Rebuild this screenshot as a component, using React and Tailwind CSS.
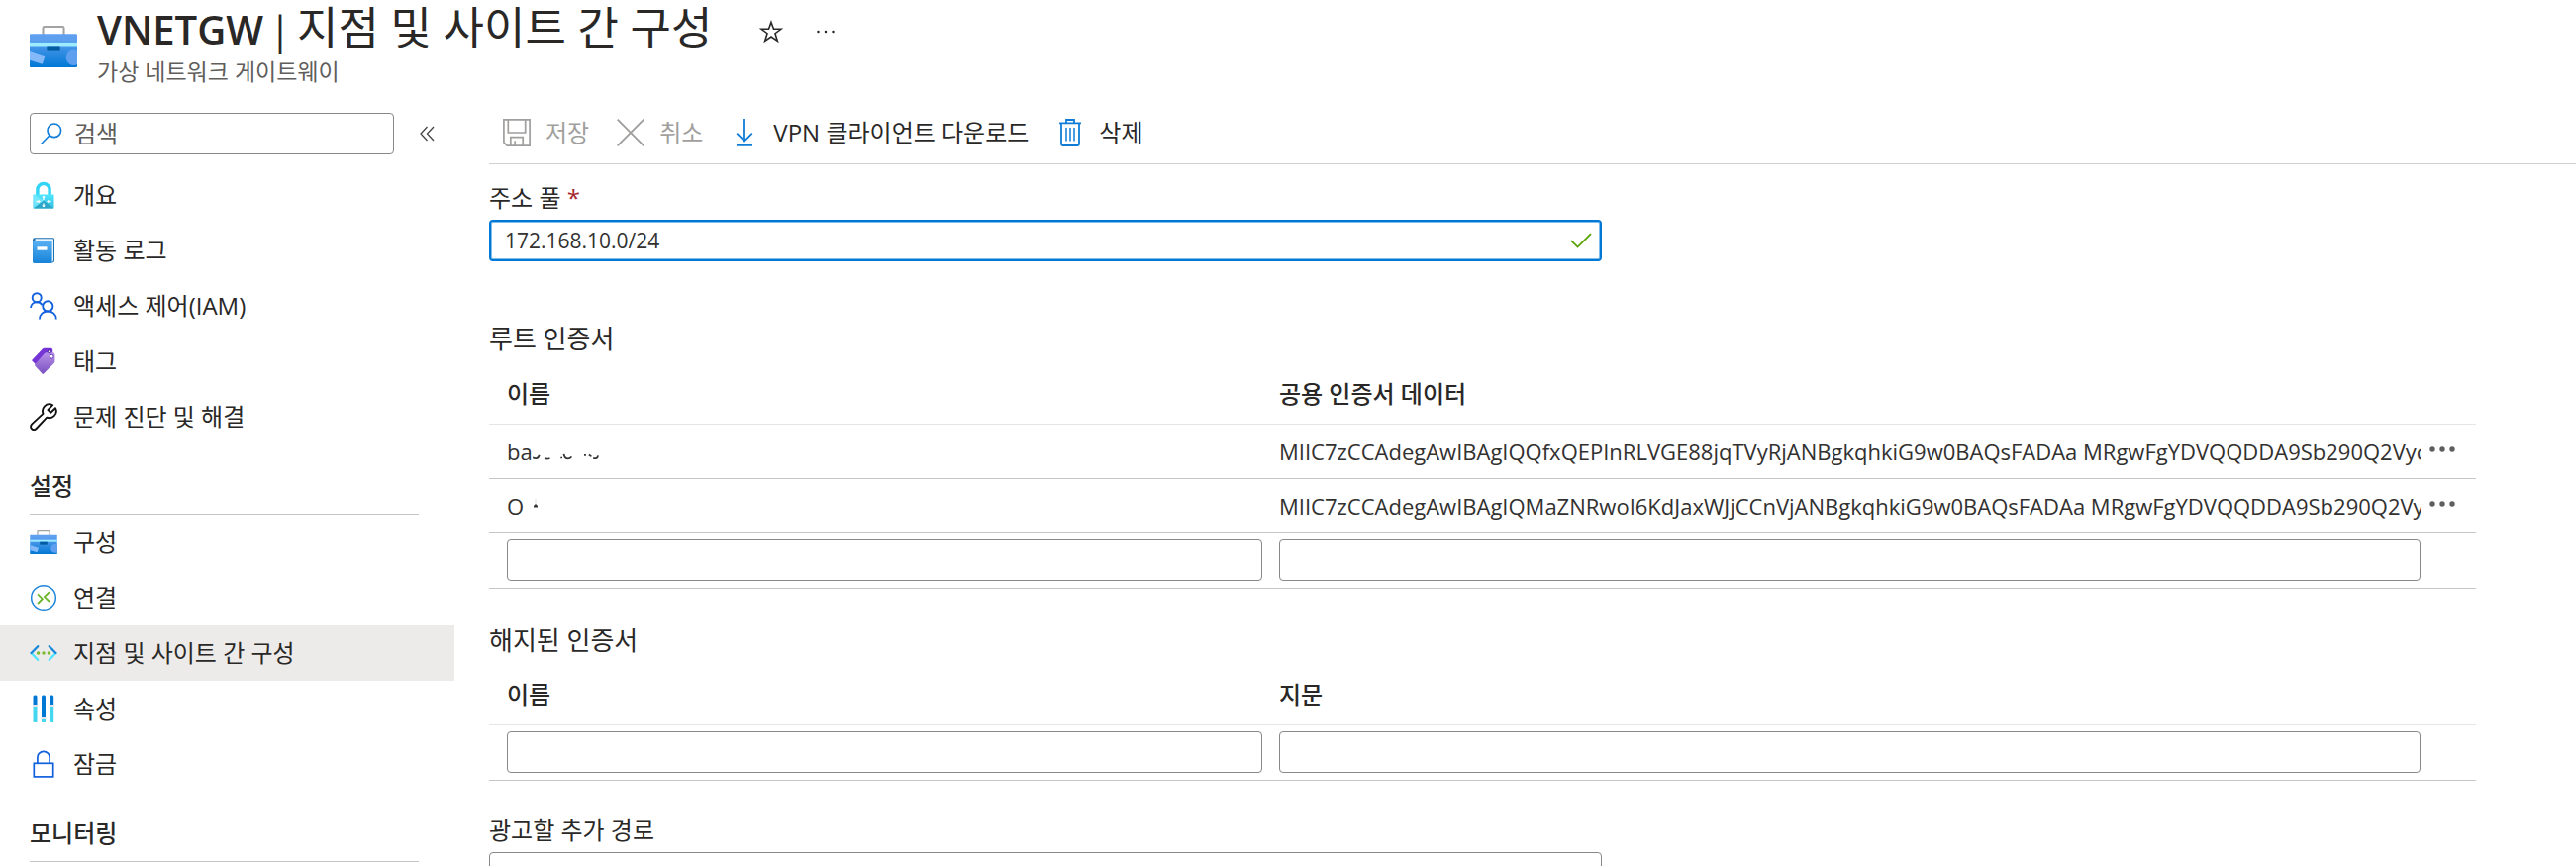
const CERT_ROWS = [
  {
    name: 'ba',
    remnant: 'strokes',
    data: 'MIIC7zCCAdegAwIBAgIQQfxQEPInRLVGE88jqTVyRjANBgkqhkiG9w0BAQsFADAa MRgwFgYDVQQDDA9Sb290Q2Vyc',
  },
  {
    name: 'O',
    remnant: 'dot',
    data: 'MIIC7zCCAdegAwIBAgIQMaZNRwoI6KdJaxWJjCCnVjANBgkqhkiG9w0BAQsFADAa MRgwFgYDVQQDDA9Sb290Q2Vy',
  },
];

function ToolboxIcon({ className, id }) {
  return (
    <svg className={className} viewBox="0 0 47 41" aria-hidden="true">
      <defs>
        <linearGradient id={id} x1="0" y1="0" x2="0" y2="1">
          <stop offset="0.15" stopColor="#5ea0ef" />
          <stop offset="1" stopColor="#0078d4" />
        </linearGradient>
        <clipPath id={id + '-clip'}>
          <rect x="0" y="8" width="47" height="33" rx="1" />
        </clipPath>
      </defs>
      <path d="M13.2 9V2.2Q13.2 1 14.4 1H32.6Q33.8 1 33.8 2.2V9" fill="none" stroke="#a3a3a3" strokeWidth="2" />
      <rect x="0" y="8" width="47" height="33" rx="1" fill={'url(#' + id + ')'} />
      <rect x="0" y="16.5" width="47" height="3.5" fill="#9cebff" />
      <rect x="17" y="20" width="13" height="5" fill="#005ba1" />
      <g clipPath={'url(#' + id + '-clip)'}>
        <path d="M0 25.5 15 30.5 12.5 38 0 34Z" fill="#83b9f9" />
        <circle cx="43.5" cy="31.5" r="7.5" fill="#5ea0ef" />
      </g>
    </svg>
  );
}

function OverviewIcon() {
  return (
    <svg className="size-7" viewBox="0 0 28 28" aria-hidden="true">
      <defs>
        <linearGradient id="lock-body" x1="0" y1="0" x2="0" y2="1">
          <stop offset="0" stopColor="#50e6ff" />
          <stop offset="1" stopColor="#32bedd" />
        </linearGradient>
      </defs>
      <path d="M7.9 14V8.6a6.1 6.1 0 0 1 12.2 0V14" fill="none" stroke="#32d4f5" strokeWidth="3.4" />
      <rect x="3.5" y="13.5" width="21" height="14" rx="0.8" fill="url(#lock-body)" />
      <path d="M3.7 27.4 14 19.5 24.3 27.4Z" fill="#2ba6c8" />
      <path d="M3.7 13.6 14 19.5 3.7 27.2Z" fill="#86edff" opacity="0.7" />
      <g stroke="#fff" strokeWidth="1.3" fill="#fff">
        <path d="M14 19V15.6M14 22.5V25.5M6.5 20.5H9.5M21.5 20.5H18.5" />
        <path d="M12.7 16.2 14 14.9 15.3 16.2ZM12.7 24.8 14 26.1 15.3 24.8ZM9.2 19.3 10.5 20.5 9.2 21.7ZM18.8 19.3 17.5 20.5 18.8 21.7Z" strokeWidth="0.6" />
      </g>
    </svg>
  );
}

function LogIcon() {
  return (
    <svg className="size-7" viewBox="0 0 28 28" aria-hidden="true">
      <defs>
        <linearGradient id="book" x1="0" y1="0" x2="0" y2="1">
          <stop offset="0" stopColor="#5ab1f5" />
          <stop offset="1" stopColor="#1683d8" />
        </linearGradient>
      </defs>
      <path d="M5 1.2H23.5Q25 1.2 25 2.7V24Q25 26.5 22.5 26.5H4.5Q3 26.5 3 25V3.2Q3 1.2 5 1.2Z" fill="#1b6fae" />
      <path d="M5.5 2.3H23Q24 2.3 24 3.3V24Q24 25.8 22.5 25.8H6Z" fill="#e9f4fd" />
      <path d="M4 4H22.6V25.6Q22.6 27 21.2 27H5Q3.2 27 3.2 25.2V4.8Q3.2 4 4 4Z" fill="url(#book)" />
      <rect x="7.5" y="10.3" width="10" height="3.4" fill="#fff" />
    </svg>
  );
}

function PeopleIcon() {
  return (
    <svg className="size-7" viewBox="0 0 28 28" fill="none" stroke="#1160de" strokeWidth="1.9" aria-hidden="true">
      <circle cx="7.2" cy="5.7" r="4.5" />
      <path d="M1 16C1.2 12.6 3.8 10.3 7.2 10.3 9.6 10.3 11.2 11.2 12.6 13.2" />
      <circle cx="18.3" cy="14.4" r="5.1" />
      <path d="M10 27.5C10 22.6 13.6 19.5 18.3 19.5S26.8 22.6 26.8 27.5" />
    </svg>
  );
}

function TagIcon() {
  return (
    <svg className="size-7" viewBox="0 0 28 28" aria-hidden="true">
      <defs>
        <linearGradient id="tag" x1="0" y1="0" x2="0" y2="1">
          <stop offset="0" stopColor="#b893e8" />
          <stop offset="1" stopColor="#7a4fc0" />
        </linearGradient>
      </defs>
      <path d="M13 1.4Q13.7 .8 14.6 .8H21.4Q23.2 .8 23.2 2.6V6L7.2 18.2 2.5 13.8Q2 13.3 2.5 12.6Z" fill="#7434d6" />
      <path d="M15.2 5.7Q15.9 5.2 16.8 5.2H23.6Q25.4 5.2 25.4 7V14.2Q25.4 15 24.8 15.7L14 26.6Q13.3 27.2 12.6 26.6L5.2 18.6Q4.6 18 5.2 17.3Z" fill="url(#tag)" />
      <circle cx="20" cy="4.3" r="1.6" fill="#fff" stroke="#4a1f9e" strokeWidth="1" />
      <circle cx="22.2" cy="9.2" r="1.9" fill="#fff" stroke="#6a3fb8" strokeWidth="1" />
    </svg>
  );
}

function WrenchIcon() {
  return (
    <svg className="size-7" viewBox="0 0 28 28" fill="none" stroke="#111" strokeWidth="1.9" strokeLinejoin="round" aria-hidden="true">
      <path d="M23.2 2.2C20.8 .8 17.3 1 15 3.3 12.9 5.4 12.5 8.2 13.5 10.9L2.2 21.4C.7 22.9 .7 25 2.1 26.2 3.5 27.4 5.3 27.3 6.6 26L17.3 14.7C20 15.7 22.7 15.2 24.7 13.2 27 10.9 27.3 7.6 26 5.2L21.3 9.7 18.5 7Z" />
    </svg>
  );
}

function ConnectionIcon() {
  return (
    <svg className="size-7" viewBox="0 0 28 28" fill="none" aria-hidden="true">
      <circle cx="14" cy="14" r="12.3" fill="#fff" stroke="#1f86dd" strokeWidth="1.5" />
      <path d="M8 10.4 12.8 15.2 8 20" stroke="#6bb52a" strokeWidth="1.8" />
      <path d="M20 8.2 14.9 13.1 20 18" stroke="#6bb52a" strokeWidth="1.8" />
    </svg>
  );
}

function PointToSiteIcon() {
  return (
    <svg className="size-7" viewBox="0 0 28 28" fill="none" strokeWidth="2.3" strokeLinecap="round" aria-hidden="true">
      <path d="M1.6 14 8.2 20.8M26.4 14 19.8 20.8" stroke="#50e6ff" />
      <path d="M8.2 7.2 1.6 14M19.8 7.2 26.4 14" stroke="#1988d9" />
      <circle cx="8.6" cy="14" r="1.7" fill="#76bc2d" />
      <circle cx="14" cy="14" r="1.7" fill="#76bc2d" />
      <circle cx="19.4" cy="14" r="1.7" fill="#76bc2d" />
    </svg>
  );
}

function PropertiesIcon() {
  return (
    <svg className="size-7" viewBox="0 0 28 28" aria-hidden="true">
      <path d="M3.5 10V2Q3.5 .5 5 .5H6Q7.5 .5 7.5 2V10ZM12 22V2Q12 .5 13.5 .5H14.5Q16 .5 16 2V22ZM20.2 10V2Q20.2 .5 21.7 .5H22.7Q24.2 .5 24.2 2V10Z" fill="#0078d4" />
      <path d="M3.5 12H7.5V26Q7.5 27.5 6 27.5H5Q3.5 27.5 3.5 26ZM12 24H16V26Q16 27.5 14.5 27.5H13.5Q12 27.5 12 26ZM20.2 12H24.2V26Q24.2 27.5 22.7 27.5H21.7Q20.2 27.5 20.2 26Z" fill="#45d6f0" />
      <path d="M3 10.3H8V11.8H3ZM11.5 22.2H16.5V23.7H11.5ZM19.7 10.3H24.7V11.8H19.7Z" fill="#d8dde2" />
    </svg>
  );
}

function LockIcon() {
  return (
    <svg className="size-7" viewBox="0 0 28 28" fill="none" stroke="#1160de" strokeWidth="1.7" aria-hidden="true">
      <rect x="4.3" y="13.3" width="19.4" height="13.6" />
      <path d="M7.9 13.3V7.5a6.1 6.1 0 0 1 12.2 0V13.3" />
    </svg>
  );
}

function SearchIcon() {
  return (
    <svg className="size-[22px] shrink-0" viewBox="0 0 22 22" fill="none" stroke="#0f7dd8" strokeWidth="1.6" aria-hidden="true">
      <circle cx="13.8" cy="7.8" r="6.8" />
      <path d="M9 12.7.8 21.2" />
    </svg>
  );
}

function SaveIcon() {
  return (
    <svg className="size-7" viewBox="0 0 28 28" fill="none" stroke="#a19f9d" strokeWidth="1.7" aria-hidden="true">
      <path d="M.9 .9H27.1V27.1H4.2L.9 23.8Z" />
      <path d="M5.3 .9V14H22.7V.9M7.8 27V18.6H20.2V27M12.2 27V22.2" />
    </svg>
  );
}

function CancelIcon() {
  return (
    <svg className="size-7" viewBox="0 0 28 28" fill="none" stroke="#a19f9d" strokeWidth="1.9" aria-hidden="true">
      <path d="M.7 .7 27.3 27.3M27.3 .7 .7 27.3" />
    </svg>
  );
}

function DownloadIcon() {
  return (
    <svg className="size-7" viewBox="0 0 28 28" fill="none" stroke="#0f7dd8" strokeWidth="1.8" aria-hidden="true">
      <path d="M14 0V22M6.2 14.6 14 22.4 21.8 14.6M6 26.8H22" />
    </svg>
  );
}

function TrashIcon() {
  return (
    <svg className="size-7" viewBox="0 0 28 28" fill="none" stroke="#0f7dd8" strokeWidth="1.8" aria-hidden="true">
      <path d="M3 4.4H25M10 4.4V1H18V4.4M5 4.4V25.6Q5 27 6.4 27H21.6Q23 27 23 25.6V4.4" />
      <path d="M10 9V22.6M14 9V22.6M18 9V22.6" strokeWidth="1.5" />
    </svg>
  );
}

function StarIcon() {
  return (
    <svg className="size-6" viewBox="0 0 24 24" fill="none" stroke="#292827" strokeWidth="1.6" aria-hidden="true">
      <path d="M12 2.4 14.5 9.3H22L16 13.7 18.3 21.4 12 17 5.7 21.4 8 13.7 2 9.3H9.5Z" />
    </svg>
  );
}

function DotsIcon({ className, r }) {
  return (
    <svg className={className} viewBox="0 0 28 8" fill="currentColor" aria-hidden="true">
      <circle cx="4" cy="4" r={r} />
      <circle cx="14" cy="4" r={r} />
      <circle cx="24" cy="4" r={r} />
    </svg>
  );
}

function CollapseIcon() {
  return (
    <svg className="h-4 w-[15px]" viewBox="0 0 15 16" fill="none" stroke="#444" strokeWidth="1.3" aria-hidden="true">
      <path d="M7.5 1 1 8 7.5 15M14 1 7.5 8 14 15" />
    </svg>
  );
}

function Remnant({ kind }) {
  if (kind === 'dot') {
    return (
      <svg className="ml-1 h-7 w-4" viewBox="0 0 16 28" fill="none" stroke="#333" aria-hidden="true">
        <path d="M6 14.4H10M8 12.5V14" strokeWidth="2" />
        <path d="M8 7V12" stroke="#ddd" strokeWidth="1" />
      </svg>
    );
  }
  return (
    <svg className="h-7 w-[68px]" viewBox="1 0 70 28" fill="none" stroke="#333" strokeWidth="1.8" aria-hidden="true">
      <path d="M1 20.6Q6.5 22.8 8 18M13.5 21.2Q16 22.4 19 21.2M31 21.5V20M33.5 17Q34 21.6 38 21.6 40.5 21.6 41.5 19.6M54.5 18H56.5M59.5 17.5Q61.5 18.6 62 19.5M64 21Q68.5 22.4 69 18.5" />
    </svg>
  );
}

const MENU = [
  { label: '개요', icon: <OverviewIcon /> },
  { label: '활동 로그', icon: <LogIcon /> },
  { label: '액세스 제어(IAM)', icon: <PeopleIcon /> },
  { label: '태그', icon: <TagIcon /> },
  { label: '문제 진단 및 해결', icon: <WrenchIcon /> },
];

const SETTINGS = [
  { label: '구성', icon: <ToolboxIcon className="h-6 w-7" id="menu-toolbox" /> },
  { label: '연결', icon: <ConnectionIcon /> },
  { label: '지점 및 사이트 간 구성', icon: <PointToSiteIcon />, active: true },
  { label: '속성', icon: <PropertiesIcon /> },
  { label: '잠금', icon: <LockIcon /> },
];

const FIELD = 'block h-[42px] w-full rounded-sm border border-[#8a8886] bg-white px-4 text-[22px] outline-none';

function MenuList({ items }) {
  return (
    <ul>
      {items.map((item) => (
        <li key={item.label}>
          <a
            href="#"
            aria-current={item.active ? 'page' : undefined}
            className={item.active ? 'flex h-14 items-center gap-4 bg-[#edebe9] pl-[30px]' : 'flex h-14 items-center gap-4 pl-[30px]'}
          >
            {item.icon}
            <span>{item.label}</span>
          </a>
        </li>
      ))}
    </ul>
  );
}

function MenuHeading({ children }) {
  return (
    <h2 className="mr-9 ml-[30px] flex h-[71px] items-end border-b border-[#c8c6c4] pb-3 leading-8 font-medium">{children}</h2>
  );
}

function ToolButton({ icon, children, disabled }) {
  return (
    <button type="button" disabled={disabled} className="flex items-center gap-[15px] disabled:text-[#a19f9d]">
      {icon}
      <span>{children}</span>
    </button>
  );
}

function CertTable({ label, secondHeader, rows }) {
  return (
    <table aria-label={label} className="mt-2 w-full table-fixed border-collapse text-left">
      <thead>
        <tr className="h-[60px] border-b border-[#e6e6e6]">
          <th className="w-[39.76%] pl-[18px] font-medium">이름</th>
          <th className="font-medium">{secondHeader}</th>
          <td className="w-14" />
        </tr>
      </thead>
      <tbody>
        {rows.map((row) => (
          <tr key={row.data} className="h-[55px] border-b border-[#c8c6c4] text-[22px] text-[#323130]">
            <td className="pl-[18px]">
              <div className="flex items-center">
                {row.name}
                <Remnant kind={row.remnant} />
              </div>
            </td>
            <td className="overflow-hidden whitespace-nowrap">{row.data}</td>
            <td className="pb-1 pl-1.5">
              <button type="button" aria-label="메뉴" className="block text-[#605e5c]">
                <DotsIcon className="h-2 w-8" r="2.7" />
              </button>
            </td>
          </tr>
        ))}
        <tr className="border-b border-[#c8c6c4]">
          <td className="pt-1.5 pr-[17px] pb-[7px] pl-[18px]">
            <input aria-label="이름" className={FIELD} />
          </td>
          <td className="pt-1.5 pb-[7px]">
            <input aria-label={secondHeader} className={FIELD} />
          </td>
          <td />
        </tr>
      </tbody>
    </table>
  );
}

export default function App() {
  return (
    <div className="h-screen overflow-hidden bg-white font-['Open_Sans','Noto_Sans_CJK_KR',sans-serif] text-[24px] leading-8 text-[#292827]">
      <header className="flex h-[114px] items-start pl-[30px]">
        <ToolboxIcon className="mt-[26px] h-[42px] w-12" id="header-toolbox" />
        <div className="ml-5">
          <h1 className="flex items-baseline gap-1.5 leading-[56px]">
            <span className="text-[40px] font-semibold">VNETGW</span>
            <span className="text-[40px]">|</span>
            <span className="text-[45px]">지점 및 사이트 간 구성</span>
          </h1>
          <p className="text-[23px] leading-7 text-[#605e5c]">가상 네트워크 게이트웨이</p>
        </div>
        <div className="mt-5 ml-12 flex items-center gap-8">
          <button type="button" aria-label="즐겨찾기">
            <StarIcon />
          </button>
          <button type="button" aria-label="더 보기">
            <DotsIcon className="h-[6px] w-[22px]" r="1.7" />
          </button>
        </div>
      </header>

      <div className="flex items-start">
        <nav className="w-[459px] shrink-0">
          <div className="mb-[13px] flex items-center gap-[26px] pl-[30px]">
            <label className="flex h-[42px] w-[368px] items-center gap-3 rounded-sm border border-[#8a8886] pl-2.5">
              <SearchIcon />
              <input
                type="search"
                aria-label="검색"
                placeholder="검색"
                className="min-w-0 flex-1 bg-transparent outline-none placeholder:text-[#605e5c]"
              />
            </label>
            <button type="button" aria-label="메뉴 축소">
              <CollapseIcon />
            </button>
          </div>
          <MenuList items={MENU} />
          <MenuHeading>설정</MenuHeading>
          <MenuList items={SETTINGS} />
          <MenuHeading>모니터링</MenuHeading>
        </nav>

        <main className="ml-[35px] min-w-0 flex-1">
          <div className="flex h-[52px] items-start gap-7 border-b border-[#d2d0ce] pt-1 pl-[14px]">
            <ToolButton icon={<SaveIcon />} disabled>저장</ToolButton>
            <ToolButton icon={<CancelIcon />} disabled>취소</ToolButton>
            <ToolButton icon={<DownloadIcon />}>VPN 클라이언트 다운로드</ToolButton>
            <ToolButton icon={<TrashIcon />}>삭제</ToolButton>
          </div>

          <div className="pr-[101px]">
            <label htmlFor="address-pool" className="mt-[18px] block">
              주소 풀 <span className="text-[#a4262c]">*</span>
            </label>
            <div className="mt-1.5 flex h-[42px] w-[56%] items-center rounded-sm border-2 border-[#0078d4] pr-2 inset-ring inset-ring-[#7fbdec]">
              <input
                id="address-pool"
                defaultValue="172.168.10.0/24"
                className="min-w-0 flex-1 bg-transparent pl-[14px] text-[21px] text-[#323130] outline-none"
              />
              <svg className="h-4 w-[22px]" viewBox="0 0 22 16" fill="none" stroke="#57a300" strokeWidth="1.8" aria-hidden="true">
                <path d="M1 8.2 7.6 14.6 21 1.2" />
              </svg>
            </div>

            <h2 className="mt-[60px] text-[26px] leading-9">루트 인증서</h2>
            <CertTable label="루트 인증서" secondHeader="공용 인증서 데이터" rows={CERT_ROWS} />

            <h2 className="mt-[34px] text-[26px] leading-9">해지된 인증서</h2>
            <CertTable label="해지된 인증서" secondHeader="지문" rows={[]} />

            <label htmlFor="extra-routes" className="mt-[34px] block">광고할 추가 경로</label>
            <div className="mt-1.5 w-[56%]">
              <input id="extra-routes" className={FIELD} />
            </div>
          </div>
        </main>
      </div>
    </div>
  );
}
